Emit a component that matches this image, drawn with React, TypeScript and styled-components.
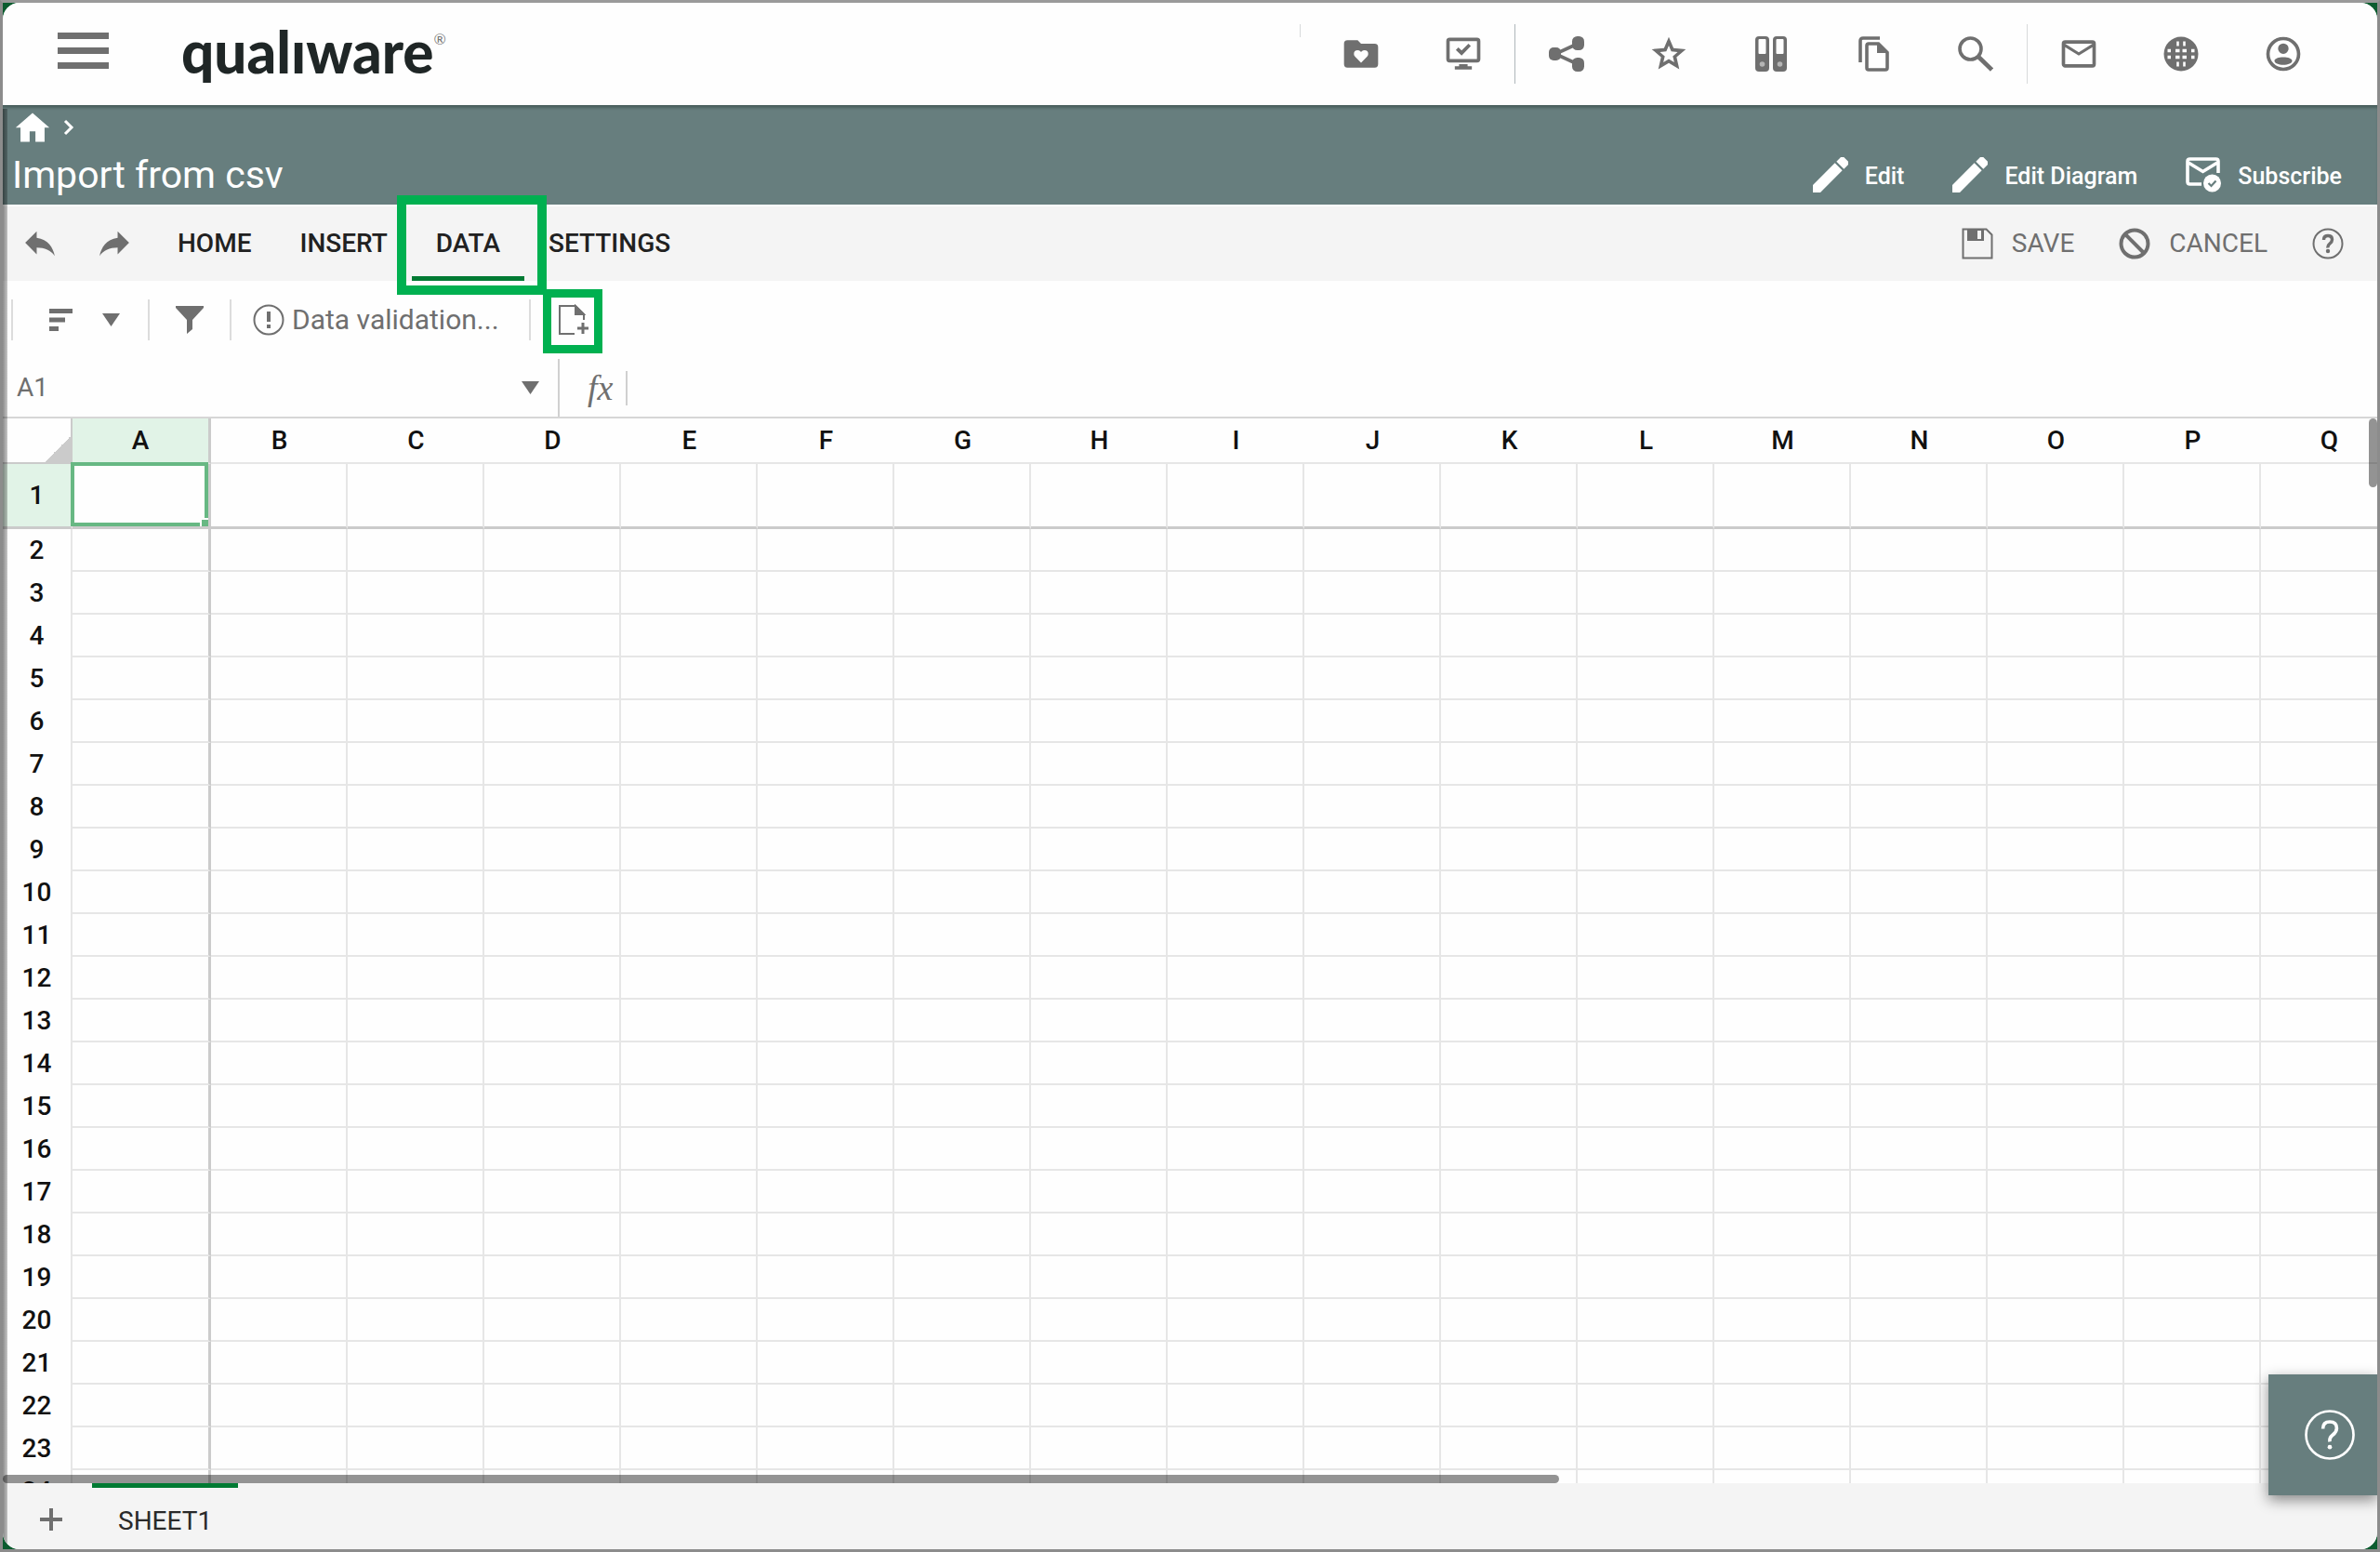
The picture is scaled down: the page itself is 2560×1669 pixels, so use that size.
import React from "react";
import styled, { createGlobalStyle, css } from "styled-components";

const ink = "#6f6f6f";
const teal = "#677e7e";
const line = "#e6e6e6";
const strong = "#cbcbcb";
const tint = "#e1f3e7";
const annotation = "#00b050";

const GlobalStyle = createGlobalStyle`
  *, *::before, *::after { box-sizing: border-box; }
  html, body { margin: 0; height: 100%; }
  body { font-family: Roboto, "Liberation Sans", sans-serif; background: #0b5c2f; }
  button, input { font: inherit; color: inherit; }
`;

const Frame = styled.div`
  height: 100vh;
  border: 3px solid #8c8c8c;
  border-top-color: #9a9a9a;
  background: #0b5c2f;
`;

const Window = styled.div`
  position: relative;
  height: 100%;
  display: flex;
  flex-direction: column;
  overflow: hidden;
  border-radius: 18px;
  background: #fefefe;
`;

const EdgeShadow = styled.div`
  position: absolute;
  left: 0;
  top: 114px;
  bottom: 0;
  width: 5px;
  pointer-events: none;
  z-index: 4;
  background: linear-gradient(to right, rgba(0, 0, 0, 0.45), rgba(0, 0, 0, 0.22));
`;

const PlainButton = styled.button`
  display: inline-flex;
  align-items: center;
  padding: 0;
  border: 0;
  background: none;
  cursor: pointer;
`;

const Header = styled.header`
  flex: none;
  height: 110px;
  display: flex;
  align-items: flex-start;
  padding: 0 46px 0 59px;
  background: #fefefe;
`;

const MenuButton = styled(PlainButton)`
  flex-direction: column;
  gap: 9px;
  margin: 32px 78px 0 0;
`;

const MenuBar = styled.span`
  width: 55px;
  height: 7px;
  background: ${ink};
`;

const Brand = styled.a`
  display: flex;
  align-items: flex-start;
  height: 110px;
  color: #1f2626;
  text-decoration: none;
  font: 900 62px/104px Lato, sans-serif;
`;

const Mark = styled.sup`
  font: 400 16px/20px Lato, sans-serif;
  color: #777;
  margin-top: 29px;
`;

const HeaderTools = styled.nav`
  display: flex;
  margin-left: auto;
`;

const HeaderButton = styled(PlainButton)`
  width: 110px;
  height: 110px;
  justify-content: center;
  color: ${ink};
`;

const HeaderRule = styled.span<{ $short?: boolean; $dark?: boolean }>`
  width: 1px;
  height: ${(p) => (p.$short ? 14 : 64)}px;
  margin: 23px ${(p) => (p.$short ? 10 : 0)}px 0 0;
  background: ${(p) => (p.$dark ? "#aeb6ba" : "#d8dadb")};
`;

const Band = styled.section`
  flex: none;
  height: 107px;
  display: flex;
  flex-direction: column;
  padding: 4px 38px 0 10px;
  color: #fff;
  background: ${teal};
  box-shadow: inset 0 4px 3px -1px #4a605e;
`;

const Crumbs = styled.nav`
  display: flex;
  align-items: center;
  height: 40px;
  gap: 14px;
  padding-left: 3px;
  a { color: #fff; display: flex; }
`;

const BandRow = styled.div`
  display: flex;
  align-items: center;
  height: 62px;
`;

const Title = styled.h1`
  margin: 0 auto 0 0;
  font-size: 41px;
  line-height: 50px;
  font-weight: 400;
`;

const BandActions = styled.div`
  display: flex;
  gap: 52px;
`;

const BandButton = styled(PlainButton)`
  gap: 18px;
  color: #fff;
  font-size: 25px;
  line-height: 38px;
  font-weight: 500;
  span { padding-top: 4px; }
`;

const Ribbon = styled.div`
  flex: none;
  height: 82px;
  display: flex;
  align-items: center;
  padding: 0 36px 0 22px;
  background: #f4f4f4;
  border-top: 2px solid #fefefe;
`;

const HistoryButtons = styled.div`
  display: flex;
  gap: 44px;
  color: ${ink};
  margin-right: 24px;
`;

const Tabs = styled.div`
  display: flex;
  align-self: stretch;
`;

const Tab = styled.button<{ $active?: boolean }>`
  position: relative;
  padding: 0 26px;
  border: 0;
  background: none;
  color: #212121;
  font-size: 28px;
  line-height: 36px;
  font-weight: 500;
  cursor: pointer;
  ${(p) =>
    p.$active &&
    css`
      box-shadow: inset 0 -5px 0 #007a33;
    `}
`;

const Callout = styled.span<{ $wide?: boolean }>`
  position: absolute;
  pointer-events: none;
  z-index: 5;
  border: ${(p) => (p.$wide ? 10 : 9)}px solid ${annotation};
  inset: ${(p) => (p.$wide ? "-12px -24px -15px -16px" : "-16px -14px -19px -16px")};
`;

const RibbonActions = styled.div`
  display: flex;
  align-items: center;
  margin-left: auto;
  gap: 48px;
  color: ${ink};
`;

const ActionButton = styled(PlainButton)`
  gap: 20px;
  font-size: 28px;
  line-height: 36px;
`;

const Toolbar = styled.div`
  flex: none;
  height: 84px;
  display: flex;
  align-items: center;
  padding-left: 9px;
  color: ${ink};
`;

const ToolRule = styled.span`
  width: 2px;
  height: 44px;
  background: #dcdcdc;
`;

const ToolButton = styled(PlainButton)<{ $left: number; $right?: number }>`
  position: relative;
  gap: 8px;
  margin: 0 ${(p) => p.$right ?? 0}px 0 ${(p) => p.$left}px;
  font-size: 30px;
  line-height: 36px;
`;

const FormulaBar = styled.div`
  flex: none;
  height: 64px;
  display: flex;
  color: ${ink};
  border-bottom: 2px solid #d6d6d6;
`;

const NameBox = styled.div`
  display: flex;
  align-items: center;
  width: 599px;
  padding: 0 20px 0 15px;
  border-right: 2px solid #d0d0d0;
`;

const NameInput = styled.input`
  flex: 1;
  min-width: 0;
  padding: 0;
  border: 0;
  outline: 0;
  background: none;
  font-size: 28px;
  line-height: 36px;
`;

const FxLabel = styled.label`
  align-self: center;
  margin-left: 30px;
  padding-right: 14px;
  font: italic 400 38px/37px "Liberation Serif", serif;
  border-right: 2px solid #d0d0d0;
`;

const FormulaInput = styled.input`
  flex: 1;
  border: 0;
  outline: 0;
  background: none;
  padding: 0 12px;
  font-size: 28px;
`;

const GridArea = styled.main`
  position: relative;
  flex: 1;
  min-height: 0;
  overflow: hidden;
`;

const Sheet = styled.table`
  table-layout: fixed;
  width: max-content;
  border-collapse: separate;
  border-spacing: 0;
  font-size: 28px;
  color: #111;
  th { font-weight: 500; padding: 0; }
`;

const Corner = styled.td`
  padding: 0;
  width: 75px;
  height: 49px;
  border-right: 2px solid ${strong};
  border-bottom: 2px solid ${strong};
  background: linear-gradient(135deg, transparent 50%, ${strong} 50%) right bottom / 28px 28px no-repeat;
`;

const ColHead = styled.th<{ $active?: boolean }>`
  width: ${(p) => (p.$active ? 149 : 147)}px;
  height: 49px;
  line-height: 32px;
  border-bottom: 2px solid ${line};
  ${(p) =>
    p.$active &&
    css`
      background: ${tint};
      border-right: 3px solid ${strong};
    `}
`;

const RowHead = styled.th<{ $active?: boolean }>`
  height: ${(p) => (p.$active ? 70 : 46)}px;
  line-height: 32px;
  border-right: 2px solid ${line};
  ${(p) =>
    p.$active &&
    css`
      background: ${tint};
      border-bottom: 3px solid ${strong};
    `}
`;

const Cell = styled.td<{ $first?: boolean; $top?: boolean }>`
  position: relative;
  padding: 0;
  border-right: ${(p) => (p.$first ? `3px solid ${strong}` : `2px solid ${line}`)};
  border-bottom: ${(p) => (p.$top ? `3px solid ${strong}` : `2px solid ${line}`)};
`;

const Selection = styled.div`
  position: absolute;
  inset: -2px 0 0 -2px;
  border: 4px solid #67b883;
  &::after {
    content: "";
    position: absolute;
    right: -4px;
    bottom: -4px;
    width: 9px;
    height: 9px;
    border: solid #fefefe;
    border-width: 2px 0 0 2px;
    background: #67b883;
  }
`;

const ScrollX = styled.div`
  position: absolute;
  left: 0;
  bottom: 0;
  width: 1674px;
  height: 9px;
  border-radius: 5px;
  background: rgba(0, 0, 0, 0.42);
`;

const ScrollY = styled.div`
  position: absolute;
  right: 0;
  top: 0;
  width: 9px;
  height: 74px;
  border-radius: 5px;
  background: rgba(0, 0, 0, 0.42);
`;

const SheetBar = styled.footer`
  flex: none;
  height: 71px;
  display: flex;
  padding-left: 40px;
  background: #f4f4f4;
  color: ${ink};
`;

const SheetTab = styled.button`
  margin-left: 32px;
  padding: 10px 28px 0;
  border: 0;
  background: none;
  box-shadow: inset 0 5px 0 #007a33;
  color: #2a2a2a;
  font-size: 28px;
  line-height: 36px;
`;

const AddButton = styled(PlainButton)`
  padding-top: 7px;
`;

const HelpFab = styled.button`
  position: absolute;
  right: 0;
  bottom: 58px;
  width: 117px;
  height: 130px;
  display: flex;
  align-items: center;
  justify-content: center;
  padding: 0 0 0 14px;
  border: 0;
  color: #fff;
  background: ${teal};
  box-shadow: 0 5px 14px rgba(0, 0, 0, 0.45);
  z-index: 3;
  cursor: pointer;
`;

type IconProps = { d: string; w?: number; h?: number; box?: string };

function Icon({ d, w = 44, h = 44, box = "0 0 24 24" }: IconProps) {
  return (
    <svg width={w} height={h} viewBox={box} fill="currentColor" fillRule="evenodd" display="block" aria-hidden="true">
      <path d={d} />
    </svg>
  );
}

const paths = {
  folder:
    "M4 4h6l2 2h8a2 2 0 0 1 2 2v10a2 2 0 0 1-2 2H4a2 2 0 0 1-2-2V6a2 2 0 0 1 2-2zM12 17.200l3.600-3.700a2.300 2.300 0 0 0 .6-1.500 2.200 2.200 0 0 0-2.200-2.200 2.200 2.200 0 0 0-1.500.6l-.5.5-.5-.5a2.200 2.200 0 0 0-1.500-.6 2.200 2.200 0 0 0-2.200 2.200c0 .6.2 1.100.6 1.500z",
  monitor:
    "M4 2.500h16a2 2 0 0 1 2 2v10.500a2 2 0 0 1-2 2H4a2 2 0 0 1-2-2V4.500a2 2 0 0 1 2-2zM4 4.500v10.500h16V4.500zM11 13l-3.400-3.300L9.100 8.200l1.900 1.800 4-4 1.400 1.400zM9.500 18h5v1.200H17v2H7v-2h2.500z",
  star: "M22 9.240l-7.190-.62L12 2 9.190 8.630 2 9.240l5.460 4.730L5.820 21 12 17.270 18.180 21l-1.630-7.030zM12 15l-3.200 1.950.85-3.650-2.850-2.450 3.750-.33L12 7.100l1.450 3.420 3.750.33-2.850 2.450.85 3.650z",
  search:
    "M15.500 14h-.79l-.28-.27A6.500 6.500 0 0 0 16 9.500 6.500 6.500 0 1 0 9.500 16c1.610 0 3.090-.59 4.230-1.570l.27.28v.79l5 5L20.500 19zM9.500 14a4.500 4.500 0 1 1 0-9 4.500 4.500 0 0 1 0 9z",
  mail: "M20 4H4a2 2 0 0 0-2 2v12c0 1.100.9 2 2 2h16a2 2 0 0 0 2-2V6a2 2 0 0 0-2-2zM4 18V8l8 5 8-5v10zM12 11L4 6h16z",
  account:
    "M12 2a10 10 0 1 0 0 20 10 10 0 0 0 0-20zM12 4a8 8 0 1 1 0 16 8 8 0 0 1 0-16zM12 5.800a3.100 3.100 0 1 0 0 6.200 3.100 3.100 0 0 0 0-6.200zM12 13.900c-2.700 0-5.200.8-5.200 2.200 0 1.300 2.500 2.300 5.200 2.300s5.200-1 5.200-2.300c0-1.400-2.500-2.200-5.200-2.200z",
  home: "M12 3L1.500 12.200H4.500V21h5.700v-6.500h3.600V21h5.700v-8.800h3z",
  pencil: "M3 17.200L14.200 6l3.800 3.800L6.800 21H3zM15 5.200l2.100-2.100a1.300 1.300 0 0 1 1.800 0l2 2a1.300 1.300 0 0 1 0 1.800L18.800 9z",
  undo: "M10 9V5l-7 7 7 7v-4.100c5 0 8.500 1.600 11 5.100-1-5-4-10-11-11z",
  redo: "M14 9V5l7 7-7 7v-4.100c-5 0-8.500 1.600-11 5.100 1-5 4-10 11-11z",
};

const Share = () => (
  <svg width="38" height="38" viewBox="0 0 38 38" fill="currentColor" aria-hidden="true">
    <path d="M31 8L7 19l24 11" fill="none" stroke="currentColor" strokeWidth="3.600" />
    <rect x="0" y="12" width="13" height="14" rx="5" />
    <rect x="25" y="0" width="13" height="15" rx="5.500" />
    <rect x="25" y="23" width="13" height="15" rx="5.500" />
  </svg>
);

const Binders = () => (
  <svg width="34" height="38" viewBox="0 0 34 38" fill="currentColor" aria-hidden="true">
    <rect width="15" height="38" rx="4" />
    <rect x="19" width="15" height="38" rx="4" />
    <g fill="#fefefe">
      <rect x="3.500" y="3" width="8" height="16" rx="1" />
      <rect x="22.500" y="3" width="8" height="16" rx="1" />
    </g>
    <g fill="#b5b5b5">
      <circle cx="7.500" cy="30" r="2.800" />
      <circle cx="26.500" cy="30" r="2.800" />
    </g>
  </svg>
);

const Copy = () => (
  <svg width="33" height="38" viewBox="0 0 33 38" fill="none" stroke="currentColor" strokeWidth="3.600" aria-hidden="true">
    <path d="M2 28V5q0-3 3-3h18" />
    <path d="M11 8h10.500L31 17.500V34q0 2-2 2H11q-2 0-2-2V10q0-2 2-2z" />
    <path d="M20 7v11h11z" fill="currentColor" stroke="none" />
  </svg>
);

const Search = () => (
  <svg width="38" height="38" viewBox="0 0 38 38" fill="none" stroke="currentColor" aria-hidden="true">
    <circle cx="13.500" cy="13.500" r="11.500" strokeWidth="3.600" />
    <path d="M22.500 22.500l14 13.500" strokeWidth="4.600" />
  </svg>
);

const Globe = () => (
  <svg width="38" height="38" viewBox="0 0 38 38" aria-hidden="true">
    <circle cx="19" cy="19" r="18.500" fill="currentColor" />
    <g fill="none" stroke="#fefefe">
      <path d="M15.500 5.500v5M22.500 5.500v5M15.500 27.500v5M22.500 27.500v5" strokeWidth="2.600" />
      <path d="M4.500 15.500h3.500M4.500 22.500h3.500M13 15.500h4.500M13 22.500h4.500M20.500 15.500h4.500M20.500 22.500h4.500M30 15.500h3.500M30 22.500h3.500" strokeWidth="3.600" />
    </g>
  </svg>
);

const SubscribeIcon = () => (
  <svg width="38" height="38" viewBox="0 0 38 38" fill="none" stroke="currentColor" aria-hidden="true">
    <path d="M17 29H4.500Q2 29 2 26.500V4.500Q2 2 4.500 2h28Q35 2 35 4.500V17" strokeWidth="3.600" />
    <path d="M3 6l15.500 9.500L34 6" strokeWidth="3.600" />
    <circle cx="28.500" cy="28" r="9.500" fill="currentColor" stroke="none" />
    <path d="M24.500 28l3 3 5-5.500" stroke={teal} strokeWidth="2.200" />
  </svg>
);

const Line = ({ children, size = 34 }: { children: React.ReactNode; size?: number }) => (
  <svg width={size} height={size} viewBox="0 0 34 34" fill="none" stroke="currentColor" strokeWidth="2" aria-hidden="true">
    {children}
  </svg>
);

const Question = ({ thick }: { thick: number }) => (
  <>
    <path d="M12.500 13Q12.500 8.500 17 8.500t4.500 4.200Q21.500 15 19 17T17 21.500" strokeWidth={thick} />
    <circle cx="17" cy="25" r={thick * 0.65} fill="currentColor" stroke="none" />
  </>
);

const Caret = () => (
  <svg width="19" height="14" viewBox="0 0 19 14" fill="currentColor" aria-hidden="true">
    <path d="M0 0h19l-9.500 14z" />
  </svg>
);

const columns = "ABCDEFGHIJKLMNOPQ".split("");
const rows = Array.from({ length: 24 }, (_, i) => i + 1);

export default function App() {
  return (
    <>
      <GlobalStyle />
      <Frame>
        <Window>
          <Header>
            <MenuButton aria-label="Menu">
              <MenuBar />
              <MenuBar />
              <MenuBar />
            </MenuButton>
            <Brand href="#">
              qualıware<Mark>®</Mark>
            </Brand>
            <HeaderTools aria-label="Tools">
              <HeaderRule $short />
              <HeaderButton aria-label="Favourites"><Icon d={paths.folder} /></HeaderButton>
              <HeaderButton aria-label="Approvals"><Icon d={paths.monitor} /></HeaderButton>
              <HeaderRule $dark />
              <HeaderButton aria-label="Share"><Share /></HeaderButton>
              <HeaderButton aria-label="Star"><Icon d={paths.star} /></HeaderButton>
              <HeaderButton aria-label="Compare"><Binders /></HeaderButton>
              <HeaderButton aria-label="Copy"><Copy /></HeaderButton>
              <HeaderButton aria-label="Search"><Search /></HeaderButton>
              <HeaderRule />
              <HeaderButton aria-label="Mail"><Icon d={paths.mail} /></HeaderButton>
              <HeaderButton aria-label="Language"><Globe /></HeaderButton>
              <HeaderButton aria-label="Account"><Icon d={paths.account} /></HeaderButton>
            </HeaderTools>
          </Header>

          <Band>
            <Crumbs aria-label="Breadcrumb">
              <a href="#" aria-label="Home"><Icon d={paths.home} w={38} h={34} box="1 3 22 18" /></a>
              <svg width="12" height="18" viewBox="0 0 12 18" fill="none" stroke="#fff" strokeWidth="3" aria-hidden="true">
                <path d="M2 2l7 7-7 7" />
              </svg>
            </Crumbs>
            <BandRow>
              <Title>Import from csv</Title>
              <BandActions>
                <BandButton><Icon d={paths.pencil} w={38} h={38} box="3 3 18 18" /><span>Edit</span></BandButton>
                <BandButton><Icon d={paths.pencil} w={38} h={38} box="3 3 18 18" /><span>Edit Diagram</span></BandButton>
                <BandButton><SubscribeIcon /><span>Subscribe</span></BandButton>
              </BandActions>
            </BandRow>
          </Band>

          <Ribbon>
            <HistoryButtons>
              <PlainButton aria-label="Undo"><Icon d={paths.undo} w={36} h={30} box="2 4 20 17" /></PlainButton>
              <PlainButton aria-label="Redo"><Icon d={paths.redo} w={36} h={30} box="2 4 20 17" /></PlainButton>
            </HistoryButtons>
            <Tabs role="tablist">
              <Tab role="tab">HOME</Tab>
              <Tab role="tab">INSERT</Tab>
              <Tab role="tab" aria-selected $active>
                DATA
                <Callout $wide />
              </Tab>
              <Tab role="tab">SETTINGS</Tab>
            </Tabs>
            <RibbonActions>
              <ActionButton>
                <Line>
                  <path d="M1.500 1.500h25l6 6v25h-31z" />
                  <path d="M6 1h18v13H6zM17 3v9h4V3z" fill="currentColor" fillRule="evenodd" stroke="none" />
                </Line>
                SAVE
              </ActionButton>
              <ActionButton>
                <Line>
                  <circle cx="17" cy="17" r="14.500" strokeWidth="4" />
                  <path d="M7 7l20 20" strokeWidth="4" />
                </Line>
                CANCEL
              </ActionButton>
              <PlainButton aria-label="Help">
                <Line>
                  <circle cx="17" cy="17" r="15.500" />
                  <Question thick={3.4} />
                </Line>
              </PlainButton>
            </RibbonActions>
          </Ribbon>

          <Toolbar>
            <ToolRule />
            <ToolButton $left={39} aria-label="Sort">
              <svg width="25" height="24" viewBox="0 0 25 24" fill="currentColor" aria-hidden="true">
                <path d="M0 0h25v5H0zM0 9.500h17v5H0zM0 19h10v5H0z" />
              </svg>
            </ToolButton>
            <ToolButton $left={32} $right={30} aria-label="Sort options"><Caret /></ToolButton>
            <ToolRule />
            <ToolButton $left={28} $right={28} aria-label="Filter">
              <svg width="30" height="30" viewBox="0 0 30 30" fill="currentColor" aria-hidden="true">
                <path d="M0 0h30v2L18 15v10l-6 5V15L0 2z" />
              </svg>
            </ToolButton>
            <ToolRule />
            <ToolButton $left={23} $right={32}>
              <Line>
                <circle cx="17" cy="17" r="15.500" />
                <path d="M17 8v11M17 22v4" strokeWidth="4" />
              </Line>
              Data validation...
            </ToolButton>
            <ToolRule />
            <ToolButton $left={29} aria-label="Import from csv">
              <Line>
                <path d="M18 32H2V2h17l9 9v6M19 2v9h9" />
                <path d="M19 2v9h9z" fill="currentColor" />
                <path d="M27 20v12M21 26h12" strokeWidth="3" />
              </Line>
              <Callout />
            </ToolButton>
          </Toolbar>

          <FormulaBar>
            <NameBox>
              <NameInput aria-label="Cell name" defaultValue="A1" />
              <PlainButton aria-label="Named ranges"><Caret /></PlainButton>
            </NameBox>
            <FxLabel htmlFor="formula">fx</FxLabel>
            <FormulaInput id="formula" />
          </FormulaBar>

          <GridArea>
            <Sheet>
              <thead>
                <tr>
                  <Corner />
                  {columns.map((c, i) => (
                    <ColHead key={c} scope="col" $active={i === 0}>{c}</ColHead>
                  ))}
                </tr>
              </thead>
              <tbody>
                {rows.map((r) => (
                  <tr key={r}>
                    <RowHead scope="row" $active={r === 1}>{r}</RowHead>
                    {columns.map((c, i) => (
                      <Cell key={c} $first={i === 0} $top={r === 1}>
                        {r === 1 && i === 0 && <Selection />}
                      </Cell>
                    ))}
                  </tr>
                ))}
              </tbody>
            </Sheet>
            <ScrollX />
            <ScrollY />
          </GridArea>

          <SheetBar>
            <AddButton aria-label="Add sheet">
              <svg width="24" height="24" viewBox="0 0 24 24" stroke="currentColor" strokeWidth="4" aria-hidden="true">
                <path d="M12 0v24M0 12h24" />
              </svg>
            </AddButton>
            <SheetTab>SHEET1</SheetTab>
          </SheetBar>

          <HelpFab aria-label="Help">
            <Line size={56}>
              <circle cx="17" cy="17" r="15.500" strokeWidth="1.600" />
              <Question thick={2.2} />
            </Line>
          </HelpFab>
          <EdgeShadow />
        </Window>
      </Frame>
    </>
  );
}
